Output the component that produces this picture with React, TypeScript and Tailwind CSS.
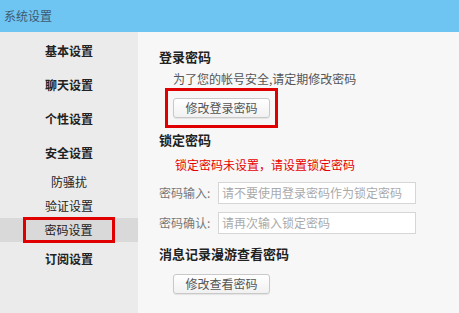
import React from "react";

const font = { fontFamily: '"Noto Sans CJK SC", "Microsoft YaHei", sans-serif' };

function NavItem({ label, bold = true, tall = true }: { label: string; bold?: boolean; tall?: boolean }) {
  return (
    <div className={`flex items-center justify-center text-[12px] text-[#222] ${tall ? "h-[34px]" : "h-[24px]"} ${bold ? "font-bold" : ""}`}>
      {label}
    </div>
  );
}

function Btn({ label }: { label: string }) {
  return (
    <button className="h-[20px] w-[97px] rounded-[3px] border border-[#c9c9c9] bg-gradient-to-b from-white to-[#f1f1f1] text-[12px] leading-none text-[#555] shadow-[0_1px_1px_rgba(0,0,0,0.08)]">
      {label}
    </button>
  );
}

export default function App() {
  return (
    <div className="flex h-[313px] w-[459px] flex-col overflow-hidden bg-[#f7f7f7]" style={font}>
      {/* title bar */}
      <div className="flex h-[32px] shrink-0 items-center bg-[#6fc5f1] pl-[4px] text-[12px] text-[#3d5a73]">
        系统设置
      </div>

      <div className="flex flex-1">
        {/* sidebar */}
        <div className="w-[138px] shrink-0 bg-[#ebebeb] pt-[2px]">
          <NavItem label="基本设置" />
          <NavItem label="聊天设置" />
          <NavItem label="个性设置" />
          <NavItem label="安全设置" />
          <NavItem label="防骚扰" bold={false} tall={false} />
          <NavItem label="验证设置" bold={false} tall={false} />
          <div className="flex h-[24px] items-center justify-center bg-[#d9d9d9]">
            <div className="ml-[-1px] flex h-[26px] w-[92px] items-center justify-center border-[3px] border-[#e10000] text-[12px] text-[#222]">
              密码设置
            </div>
          </div>
          <NavItem label="订阅设置" />
        </div>

        {/* content */}
        <div className="flex-1 pl-[21px] pt-[15px] text-[12px]">
          <div className="flex h-[20px] items-center text-[13px] font-bold text-[#222]">登录密码</div>
          <div className="mt-[3px] flex h-[18px] items-center pl-[14px] text-[#555]">为了您的帐号安全,请定期修改密码</div>
          <div className="ml-[6px] inline-flex border-[3px] border-[#e10000] px-[5px] py-[7px]">
            <Btn label="修改登录密码" />
          </div>

          <div className="mt-[2px] flex h-[20px] items-center text-[13px] font-bold text-[#222]">锁定密码</div>
          <div className="mt-[5px] flex h-[20px] items-center pl-[16px] text-[#e60000]">锁定密码未设置，请设置锁定密码</div>

          <div className="mt-[7px] flex h-[22px] items-center">
            <span className="w-[59px] text-[#777]">密码输入:</span>
            <div className="flex h-[22px] w-[198px] items-center border border-[#d6d6d6] bg-white pl-[3px] text-[#aaa]">
              请不要使用登录密码作为锁定密码
            </div>
          </div>
          <div className="mt-[8px] flex h-[22px] items-center">
            <span className="w-[59px] text-[#777]">密码确认:</span>
            <div className="flex h-[22px] w-[198px] items-center border border-[#d6d6d6] bg-white pl-[3px] text-[#aaa]">
              请再次输入锁定密码
            </div>
          </div>

          <div className="mt-[10px] flex h-[20px] items-center text-[13px] font-bold text-[#222]">消息记录漫游查看密码</div>
          <div className="mt-[10px] pl-[14px]">
            <Btn label="修改查看密码" />
          </div>
        </div>
      </div>
    </div>
  );
}
